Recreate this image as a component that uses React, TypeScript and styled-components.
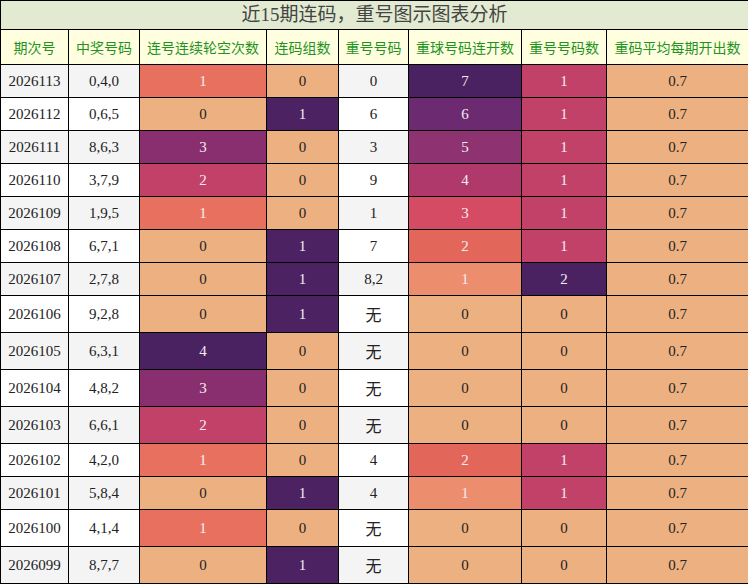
import React from "react";
import styled, { createGlobalStyle } from "styled-components";

const Global = createGlobalStyle`
  html, body { margin: 0; padding: 0; background: #fff; }
`;

const Table = styled.table`
  border-collapse: collapse;
  table-layout: fixed;
  width: 748px;
  font-family: "Liberation Serif", "Noto Sans CJK SC", serif;
  font-size: 15px;
  color: #222;
`;

const TitleCell = styled.th`
  background: #e2ebd1;
  border: 1px solid #000;
  height: 28px;
  padding: 0;
  font-weight: normal;
  font-size: 19px;
  color: #444;
  font-family: "Liberation Serif", "Noto Sans CJK SC", serif;
  text-align: center;
  line-height: 28px;
`;

const HeadCell = styled.th`
  background: #ffffe0;
  border: 1px solid #000;
  height: 34px;
  padding: 0;
  font-weight: normal;
  font-size: 14px;
  color: #1f931f;
  font-family: "Noto Sans CJK SC", sans-serif;
  text-align: center;
  white-space: nowrap;
`;

const Row = styled.tr<{ $alt: boolean }>`
  background: ${(p) => (p.$alt ? "#f4f4f4" : "#ffffff")};
`;

const Cell = styled.td<{ $bg?: string; $light?: boolean; $tall?: boolean }>`
  border: 1px solid #000;
  padding: 0;
  height: ${(p) => (p.$tall ? "36px" : "32px")};
  text-align: center;
  background: ${(p) => p.$bg || "transparent"};
  color: ${(p) => (p.$light ? "#f2eef0" : "#222")};
`;

const Wu = styled.span`
  font-family: "Noto Sans CJK SC", sans-serif;
  font-size: 16px;
`;

const PEACH = "#edb081";

const c3: Record<number, string> = {
  0: PEACH,
  1: "#e8705f",
  2: "#c14168",
  3: "#892f6f",
  4: "#4b2261",
};
const c4: Record<number, string> = { 0: PEACH, 1: "#4c2262" };
const c6: Record<number, string> = {
  0: PEACH,
  1: "#ec8d6d",
  2: "#e3665b",
  3: "#d44b63",
  4: "#b0396c",
  5: "#8e3271",
  6: "#6c2a70",
  7: "#4b2261",
};
const c7: Record<number, string> = { 0: PEACH, 1: "#c14168", 2: "#4b2261" };

type R = [string, string, number, number, string, number, number];

const rows: R[] = [
  ["2026113", "0,4,0", 1, 0, "0", 7, 1],
  ["2026112", "0,6,5", 0, 1, "6", 6, 1],
  ["2026111", "8,6,3", 3, 0, "3", 5, 1],
  ["2026110", "3,7,9", 2, 0, "9", 4, 1],
  ["2026109", "1,9,5", 1, 0, "1", 3, 1],
  ["2026108", "6,7,1", 0, 1, "7", 2, 1],
  ["2026107", "2,7,8", 0, 1, "8,2", 1, 2],
  ["2026106", "9,2,8", 0, 1, "无", 0, 0],
  ["2026105", "6,3,1", 4, 0, "无", 0, 0],
  ["2026104", "4,8,2", 3, 0, "无", 0, 0],
  ["2026103", "6,6,1", 2, 0, "无", 0, 0],
  ["2026102", "4,2,0", 1, 0, "4", 2, 1],
  ["2026101", "5,8,4", 0, 1, "4", 1, 1],
  ["2026100", "4,1,4", 1, 0, "无", 0, 0],
  ["2026099", "8,7,7", 0, 1, "无", 0, 0],
];

const widths = [68, 71, 127, 72, 70, 113, 85, 142];
const heads = [
  "期次号",
  "中奖号码",
  "连号连续轮空次数",
  "连码组数",
  "重号号码",
  "重球号码连开数",
  "重号号码数",
  "重码平均每期开出数",
];

export default function App() {
  return (
    <>
      <Global />
      <Table>
        <colgroup>
          {widths.map((w, i) => (
            <col key={i} style={{ width: w }} />
          ))}
        </colgroup>
        <thead>
          <tr>
            <TitleCell colSpan={8}>近15期连码，重号图示图表分析</TitleCell>
          </tr>
          <tr>
            {heads.map((h) => (
              <HeadCell key={h}>{h}</HeadCell>
            ))}
          </tr>
        </thead>
        <tbody>
          {rows.map((r, i) => {
            const tall = r[4] === "无";
            return (
              <Row key={r[0]} $alt={i % 2 === 0}>
                <Cell $tall={tall}>{r[0]}</Cell>
                <Cell $tall={tall}>{r[1]}</Cell>
                <Cell $tall={tall} $bg={c3[r[2]]} $light={r[2] > 0}>
                  {r[2]}
                </Cell>
                <Cell $tall={tall} $bg={c4[r[3]]} $light={r[3] > 0}>
                  {r[3]}
                </Cell>
                <Cell $tall={tall}>{tall ? <Wu>无</Wu> : r[4]}</Cell>
                <Cell $tall={tall} $bg={c6[r[5]]} $light={r[5] > 0}>
                  {r[5]}
                </Cell>
                <Cell $tall={tall} $bg={c7[r[6]]} $light={r[6] > 0}>
                  {r[6]}
                </Cell>
                <Cell $tall={tall} $bg={PEACH}>
                  0.7
                </Cell>
              </Row>
            );
          })}
        </tbody>
      </Table>
    </>
  );
}
